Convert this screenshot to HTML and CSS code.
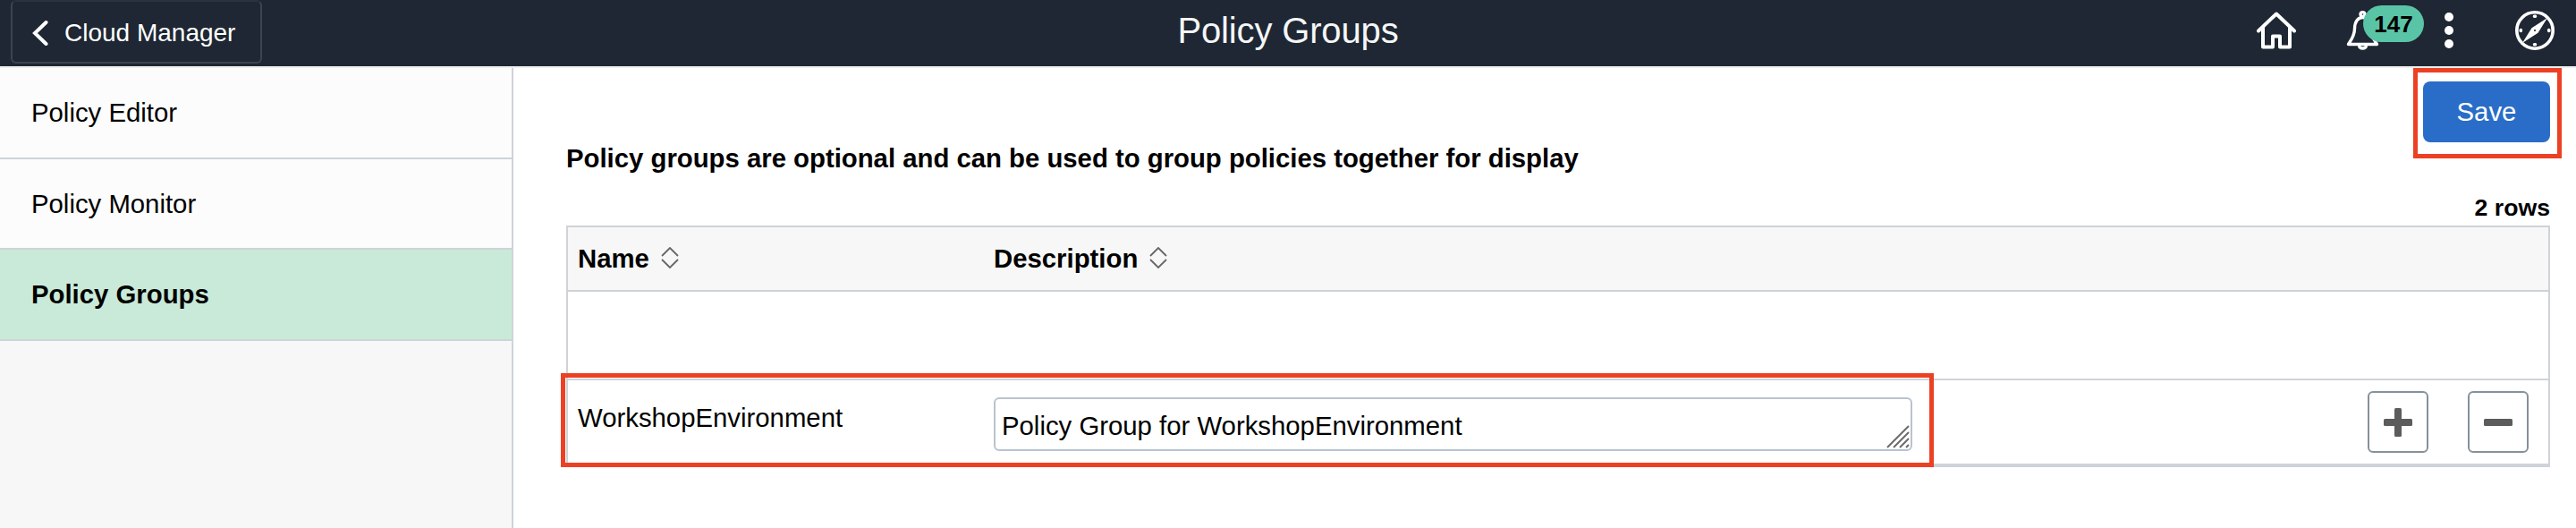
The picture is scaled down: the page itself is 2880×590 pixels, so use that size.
FILE: index.html
```html
<!DOCTYPE html>
<html lang="en">
<head>
<meta charset="utf-8">
<title>Policy Groups</title>
<link rel="stylesheet" href="styles.css">
</head>
<body>
<header class="topbar">
  <div class="topbar-side">
    <a class="back">
      <svg class="chevron" viewBox="0 0 18 28"><path d="M15.5 2 3 14 15.5 26"/></svg>
      <span>Cloud Manager</span>
    </a>
  </div>
  <h1 class="title">Policy Groups</h1>
  <nav class="topbar-side tools">
    <svg class="home" viewBox="0 0 44 42"><path d="M2 21.500 22 2.500l20 19M7 18v21.500h11V27.500h8V39.500h11V18"/></svg>
    <span class="alerts">
      <svg class="bell" viewBox="0 0 38 44"><path d="M2.500 37.500C6 32 9.500 28 9.500 20c0-7.500 3.500-12.500 9-12.500S28 12.500 28 20c0 8 3 12 6.500 17.500Z"/><circle cx="18.500" cy="4" r="2.500"/><path d="M14.500 39c.5 4 7.500 4 8 0"/></svg>
      <span class="badge">147</span>
    </span>
    <svg class="dots" viewBox="0 0 10 40"><circle cx="5" cy="5" r="5"/><circle cx="5" cy="20" r="5"/><circle cx="5" cy="35" r="5"/></svg>
    <svg class="compass" viewBox="0 0 44 44"><circle class="ring" cx="22" cy="22" r="20.200"/><path class="needle" fill-rule="evenodd" d="M36 8 25.500 24.800 8 36 18.500 19.200ZM22 20.900a1.100 1.100 0 1 0 0 2.200a1.100 1.100 0 1 0 0-2.200Z"/><path class="ticks" d="M21.500 6.300h1M21.500 37.700h1M6.300 21.500v1M37.700 21.500v1"/></svg>
  </nav>
</header>
<div class="page">
  <aside class="sidebar">
    <a class="item">Policy Editor</a>
    <a class="item item-mid">Policy Monitor</a>
    <a class="item active">Policy Groups</a>
  </aside>
  <main class="content">
    <div class="actions">
      <button class="save">Save</button>
      <span class="mark mark-save"></span>
    </div>
    <p class="intro">Policy groups are optional and can be used to group policies together for display</p>
    <p class="count">2 rows</p>
    <section class="grid">
      <div class="row head">
        <span class="col-name">Name <svg class="sort" viewBox="0 0 20 24"><path d="M1 10 10 1l9 9M1 14l9 9 9-9"/></svg></span>
        <span>Description <svg class="sort" viewBox="0 0 20 24"><path d="M1 10 10 1l9 9M1 14l9 9 9-9"/></svg></span>
      </div>
      <div class="row blank"></div>
      <div class="row data">
        <span class="name">WorkshopEnvironment</span>
        <div class="field">Policy Group for WorkshopEnvironment
          <svg class="grip" viewBox="0 0 26 26"><path d="M1 25 25 1M8 25 25 8M15 25 25 15M22 25 25 22"/></svg>
        </div>
        <div class="buttons">
          <button class="square"><svg viewBox="0 0 32 32"><rect x="12" width="8" height="32" rx="1.500"/><rect y="12" width="32" height="8" rx="1.500"/></svg></button>
          <button class="square"><svg viewBox="0 0 32 32"><rect y="12" width="32" height="8" rx="1.500"/></svg></button>
        </div>
        <span class="mark mark-row"></span>
      </div>
    </section>
  </main>
</div>
</body>
</html>
```
FILE: styles.css
```css
* { box-sizing: border-box; }
body {
  margin: 0;
  height: 590px;
  overflow: hidden;
  background: #fff;
  color: #000;
  font: 29.33px/34px "Liberation Sans", Arial, sans-serif;
}
p, h1 { margin: 0; }
svg { display: block; fill: none; flex: none; }

.topbar {
  display: grid;
  grid-template-columns: 1fr auto 1fr;
  height: 76px;
  background: #1e2733;
  border-bottom: 2px solid #efefef;
  color: #fff;
}
.topbar-side { display: flex; }
.back {
  display: flex;
  align-items: center;
  width: 281px;
  height: 71px;
  margin-left: 12px;
  padding: 2px 0 0 22px;
  border: 2px solid #3c444e;
  border-top-color: #2a323d;
  border-radius: 6px;
  font-size: 28px;
  gap: 18px;
}
.chevron { width: 18px; height: 28px; stroke: #fff; stroke-width: 4; stroke-linecap: round; }
.title { padding-top: 11px; color: #f5f6f7; font-size: 40px; font-weight: 400; line-height: 46px; letter-spacing: -0.15px; }

.tools { justify-content: flex-end; padding: 12px 24px 0 0; }
.home { width: 44px; height: 42px; margin: 1px 56px 0 0; stroke: #fff; stroke-width: 4; stroke-linecap: round; stroke-linejoin: round; }
.alerts { position: relative; width: 87px; margin-right: 23px; }
.bell { width: 38px; height: 44px; stroke: #fff; stroke-width: 3.4; stroke-linejoin: round; }
.badge {
  position: absolute;
  left: 19px;
  top: -6px;
  width: 68px;
  height: 41px;
  border-radius: 21px;
  background: #5ac4a7;
  color: #000;
  font-size: 26px;
  font-weight: 700;
  line-height: 43px;
  text-align: center;
}
.dots { width: 10px; height: 40px; margin: 2px 69px 0 0; fill: #fff; }
.compass { width: 44px; height: 44px; }
.ring { stroke: #fff; stroke-width: 3.6; }
.needle { fill: #fff; }
.ticks { stroke: #fff; stroke-width: 3.6; stroke-linecap: round; }

.page { display: flex; height: 514px; }
.sidebar { width: 574px; background: #f7f7f7; border-right: 2px solid #ced3d9; }
.item {
  display: block;
  height: 102px;
  padding: 33px 0 0 35px;
  border-bottom: 2px solid #ced3d9;
  background: #fcfcfc;
}
.item-mid { height: 101px; }
.active { background: #c9ead8; font-weight: 700; }

.content { width: 2277px; padding-left: 59px; }
.actions { position: relative; display: flex; justify-content: flex-end; padding-top: 15px; }
.save {
  width: 142px;
  height: 68px;
  padding: 0;
  border: 0;
  border-radius: 8px;
  background: #296dc8;
  color: #fff;
  font: inherit;
}
.mark { position: absolute; border: 5px solid #ec4024; }
.mark-save { left: 2065px; top: 0; width: 166px; height: 101px; }
.intro { margin-top: 1px; font-weight: 700; letter-spacing: -0.01px; }
.count { margin-top: 23px; font-size: 26.67px; font-weight: 700; line-height: 30px; text-align: right; }

.grid { margin-top: 5px; border: 2px solid #ced3d9; border-bottom-width: 4px; }
.row { display: grid; grid-template-columns: 465px 1027px 1fr; padding-left: 11px; }
.head { height: 72px; padding-top: 18px; background: #f7f7f7; border-bottom: 2px solid #ced3d9; font-weight: 700; }
.head span { display: flex; gap: 13px; }
.sort { width: 20px; height: 24px; margin-top: 4px; stroke: #666; stroke-width: 1.800; }
.blank { height: 99px; border-bottom: 2px solid #ced3d9; }
.data { position: relative; height: 93px; }
.name { padding-top: 25px; }
.field {
  position: relative;
  height: 60px;
  margin-top: 19px;
  padding: 13px 7px;
  border: 2px solid #b9c3ce;
  border-radius: 6px;
}
.grip { position: absolute; right: 1px; bottom: 1px; width: 26px; height: 26px; stroke: #6b6b6b; stroke-width: 2; }
.buttons { display: flex; justify-content: flex-end; gap: 44px; padding: 12px 22px 0 0; }
.square {
  display: grid;
  place-items: center;
  width: 68px;
  height: 69px;
  padding: 0;
  border: 2px solid #85919b;
  border-radius: 6px;
  background: #fff;
}
.square svg { width: 32px; height: 32px; fill: #5c5c5c; }
.mark-row { left: -8px; top: -8px; width: 1535px; height: 105px; }
```
